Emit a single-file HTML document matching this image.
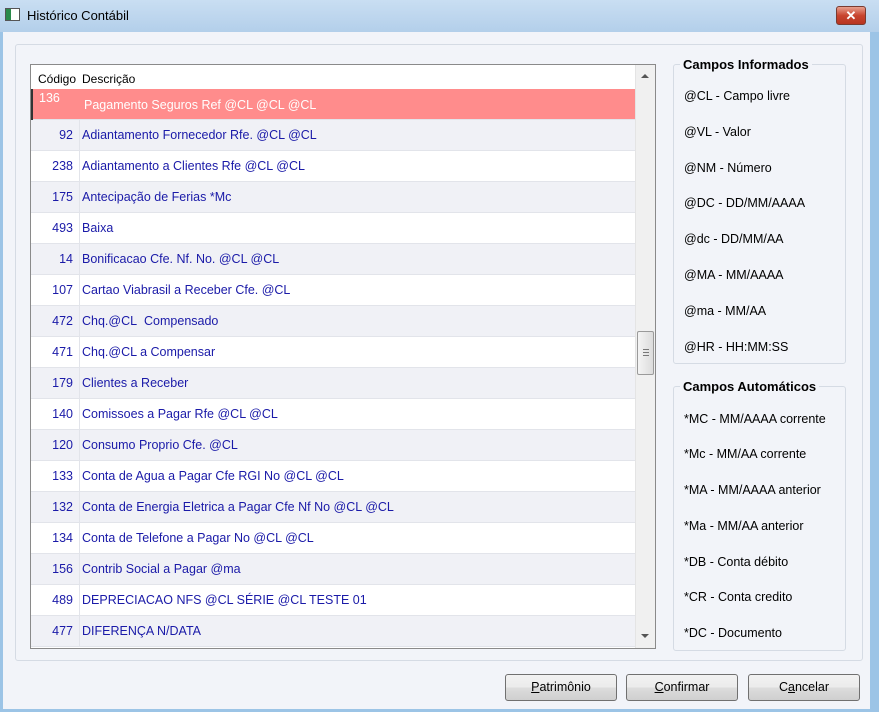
<!DOCTYPE html>
<html><head><meta charset="utf-8">
<style>
*{margin:0;padding:0;box-sizing:border-box}
body{width:879px;height:712px;overflow:hidden;font-family:"Liberation Sans",sans-serif;font-size:12px;background:#9cc4e6;position:relative}
.title{position:absolute;left:0;top:0;width:879px;height:32px;background:linear-gradient(#c9def2,#b3cfea);}
.title .t{position:absolute;left:27px;top:8px;font-size:13px;color:#000}
.icon{position:absolute;left:5px;top:8px;width:15px;height:13px;border:1px solid #555;background:linear-gradient(90deg,#2a8a4a 0 5px,#fff 5px)}
.close{position:absolute;left:836px;top:6px;width:30px;height:19px;border:1px solid #7a3b30;border-radius:3px;background:linear-gradient(#e8a08e,#c8452f 50%,#b83420);color:#fff;font-weight:bold;text-align:center;line-height:17px;font-size:13px}
.body{position:absolute;left:3px;top:32px;width:867px;height:677px;background:#f2f4f9}
.outer{position:absolute;left:15px;top:44px;width:848px;height:617px;border:1px solid #d5dbe4;border-radius:3px;background:#f2f4f9}
.grid{position:absolute;left:30px;top:64px;width:626px;height:585px;border:1px solid #8a8a8a;background:#fff;overflow:hidden}
.hdr{position:absolute;left:0;top:0;width:604px;height:24px;background:#fff;font-size:12px;color:#000}
.hdr span{position:absolute;top:7px}
.row{position:absolute;left:0;width:604px;height:31px;border-bottom:1px solid #e2e4ea;color:#1a1aa8;font-size:12.5px}
.row .c{position:absolute;left:0;width:49px;height:31px;border-right:1px solid #e2e4ea;text-align:right;padding-right:6px;line-height:30px}
.row .d{position:absolute;left:51px;line-height:30px;white-space:nowrap}
.alt{background:#f0f1f6}
.sel{background:#ff8c8c;color:#fff}
.sel .c{border-right:none;text-align:left;padding-left:6px;line-height:18px;border-left:2px solid #333}
.sel .d{left:53px;line-height:32px}
.sb{position:absolute;left:604px;top:0;width:20px;height:583px;background:#f0f0f0;border-left:1px solid #e4e4e4}
.thumb{position:absolute;left:1px;top:266px;width:17px;height:44px;border:1px solid #9a9a9a;border-radius:2px;background:linear-gradient(90deg,#f4f4f4,#dcdcdc)}
.thumb i{position:absolute;left:5px;width:6px;height:1px;background:#777}
.gb{position:absolute;left:673px;width:173px;border:1px solid #d5dbe4;border-radius:3px}
.gb h{position:absolute;left:6px;top:-8px;background:#f2f4f9;padding:0 3px;font-weight:bold;font-size:13px;color:#000}
.gb p{position:absolute;left:10px;font-size:12.5px;color:#000;white-space:nowrap}
.btn{position:absolute;top:674px;width:112px;height:27px;border:1px solid #707070;border-radius:3px;background:linear-gradient(#f2f2f2,#ebebeb 50%,#dddddd 50%,#cfcfcf);text-align:center;line-height:25px;font-size:12.5px;color:#000}
</style></head><body>
<div class="title"><div class="icon"></div><div class="t">Histórico Contábil</div><div class="close">✕</div></div>
<div class="body"></div>
<div class="outer"></div>
<div class="grid">
<div class="hdr"><span style="left:7px">Código</span><span style="left:51px">Descrição</span></div>
<div class="row sel" style="top:24px"><div class="c">136</div><div class="d">Pagamento Seguros Ref @CL @CL @CL</div></div>
<div class="row alt" style="top:55px"><div class="c">92</div><div class="d">Adiantamento Fornecedor Rfe. @CL @CL</div></div>
<div class="row" style="top:86px"><div class="c">238</div><div class="d">Adiantamento a Clientes Rfe @CL @CL</div></div>
<div class="row alt" style="top:117px"><div class="c">175</div><div class="d">Antecipação de Ferias *Mc</div></div>
<div class="row" style="top:148px"><div class="c">493</div><div class="d">Baixa</div></div>
<div class="row alt" style="top:179px"><div class="c">14</div><div class="d">Bonificacao Cfe. Nf. No. @CL @CL</div></div>
<div class="row" style="top:210px"><div class="c">107</div><div class="d">Cartao Viabrasil a Receber Cfe. @CL</div></div>
<div class="row alt" style="top:241px"><div class="c">472</div><div class="d">Chq.@CL&nbsp; Compensado</div></div>
<div class="row" style="top:272px"><div class="c">471</div><div class="d">Chq.@CL a Compensar</div></div>
<div class="row alt" style="top:303px"><div class="c">179</div><div class="d">Clientes a Receber</div></div>
<div class="row" style="top:334px"><div class="c">140</div><div class="d">Comissoes a Pagar Rfe @CL @CL</div></div>
<div class="row alt" style="top:365px"><div class="c">120</div><div class="d">Consumo Proprio Cfe. @CL</div></div>
<div class="row" style="top:396px"><div class="c">133</div><div class="d">Conta de Agua a Pagar Cfe RGI No @CL @CL</div></div>
<div class="row alt" style="top:427px"><div class="c">132</div><div class="d">Conta de Energia Eletrica a Pagar Cfe Nf No @CL @CL</div></div>
<div class="row" style="top:458px"><div class="c">134</div><div class="d">Conta de Telefone a Pagar No @CL @CL</div></div>
<div class="row alt" style="top:489px"><div class="c">156</div><div class="d">Contrib Social a Pagar @ma</div></div>
<div class="row" style="top:520px"><div class="c">489</div><div class="d">DEPRECIACAO NFS @CL SÉRIE @CL TESTE 01</div></div>
<div class="row alt" style="top:551px"><div class="c">477</div><div class="d">DIFERENÇA N/DATA</div></div>
<div class="sb">
<div style="position:absolute;left:5px;top:9px;width:0;height:0;border-left:4px solid transparent;border-right:4px solid transparent;border-bottom:4px solid #555"></div>
<div class="thumb"><i style="top:17px"></i><i style="top:20px"></i><i style="top:23px"></i></div>
<div style="position:absolute;left:5px;top:569px;width:0;height:0;border-left:4px solid transparent;border-right:4px solid transparent;border-top:4px solid #555"></div>
</div>
</div>
<div class="gb" style="top:64px;height:300px"><h>Campos Informados</h>
<p style="top:24px">@CL - Campo livre</p>
<p style="top:60px">@VL - Valor</p>
<p style="top:96px">@NM - Número</p>
<p style="top:131px">@DC - DD/MM/AAAA</p>
<p style="top:167px">@dc - DD/MM/AA</p>
<p style="top:203px">@MA - MM/AAAA</p>
<p style="top:239px">@ma - MM/AA</p>
<p style="top:275px">@HR - HH:MM:SS</p>
</div>
<div class="gb" style="top:386px;height:265px"><h>Campos Automáticos</h>
<p style="top:25px">*MC - MM/AAAA corrente</p>
<p style="top:60px">*Mc - MM/AA corrente</p>
<p style="top:96px">*MA - MM/AAAA anterior</p>
<p style="top:132px">*Ma - MM/AA anterior</p>
<p style="top:168px">*DB - Conta débito</p>
<p style="top:203px">*CR - Conta credito</p>
<p style="top:239px">*DC - Documento</p>
</div>
<div class="btn" style="left:505px"><u>P</u>atrimônio</div>
<div class="btn" style="left:626px"><u>C</u>onfirmar</div>
<div class="btn" style="left:748px">C<u>a</u>ncelar</div>
</body></html>
